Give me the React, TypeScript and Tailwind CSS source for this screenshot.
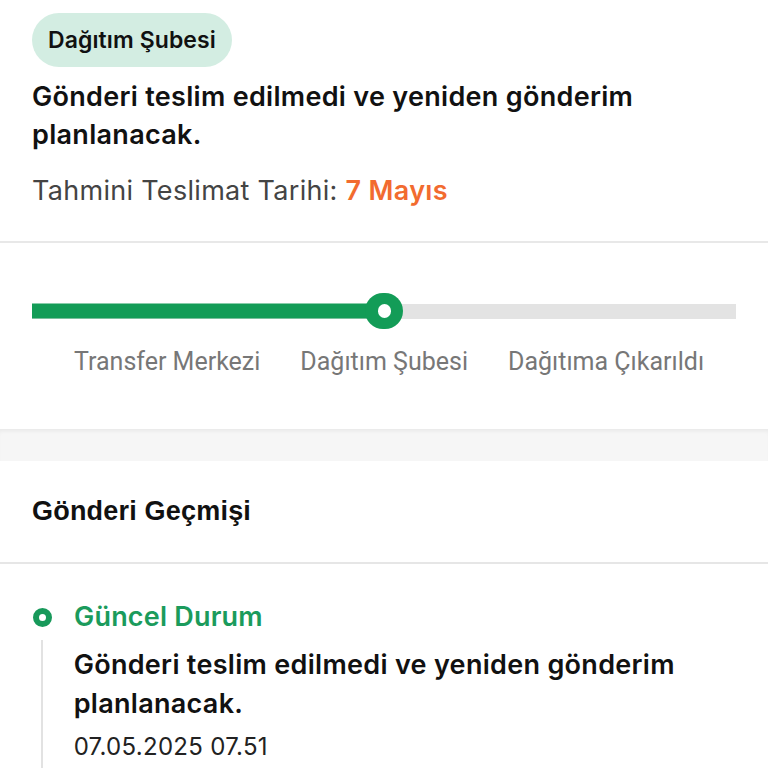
import React from 'react'

const steps = ['Transfer Merkezi', 'Dağıtım Şubesi', 'Dağıtıma Çıkarıldı']

const App: React.FC = () => {
  return (
    <div className="w-[768px] h-[768px] overflow-hidden bg-white font-['Inter','Noto_Sans',sans-serif] text-[#111]">
      {/* summary */}
      <div className="px-8 pt-[13px] pb-[34px] border-b-2 border-[#e8e8e8]">
        <span className="inline-flex h-[54px] items-center rounded-full bg-[#d3ede2] px-4 text-[23px] font-semibold tracking-[0.1px] text-[#111]">
          Dağıtım Şubesi
        </span>
        <p className="mt-[11px] text-[27px] leading-[38px] font-semibold tracking-[0.3px] text-[#111] pr-20">
          Gönderi teslim edilmedi ve yeniden gönderim planlanacak.
        </p>
        <p className="mt-[21px] text-[27px] leading-[32px] tracking-[0.3px] text-[#444]">
          Tahmini Teslimat Tarihi: <span className="font-semibold text-[#f26b2f]">7 Mayıs</span>
        </p>
      </div>

      {/* progress */}
      <div className="px-8 pt-[50px] h-[186px]">
        <div className="relative h-[36px] flex items-center">
          <div className="h-[15px] w-full bg-[#e3e3e3]" />
          <div className="absolute left-0 top-1/2 -translate-y-1/2 h-[15px] w-[350px] bg-[#139c57]" />
          <div className="absolute left-[333px] top-0 h-[36px] w-[38px] rounded-full bg-[#139c57] flex items-center justify-center">
            <div className="h-[14px] w-[13px] rounded-full bg-white" />
          </div>
        </div>
        <div className="mt-[14px] flex pl-[42px] gap-[40px] font-['Roboto',sans-serif] text-[25px] text-[#777]">
          {steps.map(s => (
            <span key={s}>{s}</span>
          ))}
        </div>
      </div>

      {/* gap */}
      <div className="h-[32px] bg-[#f6f6f6] shadow-[inset_0_4px_4px_-2px_rgba(0,0,0,0.06)]" />

      {/* history */}
      <div className="bg-white">
        <div className="h-[103px] flex items-center px-8 border-b-2 border-[#e6e6e6] font-['Liberation_Sans',sans-serif] text-[27px] font-bold tracking-[0.2px] text-[#111]">
          Gönderi Geçmişi
        </div>
        <div className="px-8 pt-[33px]">
          <div className="flex items-center gap-[22px]">
            <div className="ml-[1px] h-[19px] w-[19px] rounded-full border-[6px] border-[#17995a]" />
            <span className="text-[27px] font-semibold tracking-[0.2px] text-[#1b9b5c]">Güncel Durum</span>
          </div>
          <div className="flex">
            <div className="ml-[9px] w-[2px] bg-[#e2e2e2] h-[200px] mt-[2px]" />
            <div className="ml-[31px] pr-8">
              <p className="mt-[7px] text-[27px] leading-[39px] font-semibold tracking-[0.3px] text-[#111]">
                Gönderi teslim edilmedi ve yeniden gönderim planlanacak.
              </p>
              <p className="mt-[6px] text-[24px] tracking-[0.3px] text-[#222]">07.05.2025 07.51</p>
            </div>
          </div>
        </div>
      </div>
    </div>
  )
}

export default App
